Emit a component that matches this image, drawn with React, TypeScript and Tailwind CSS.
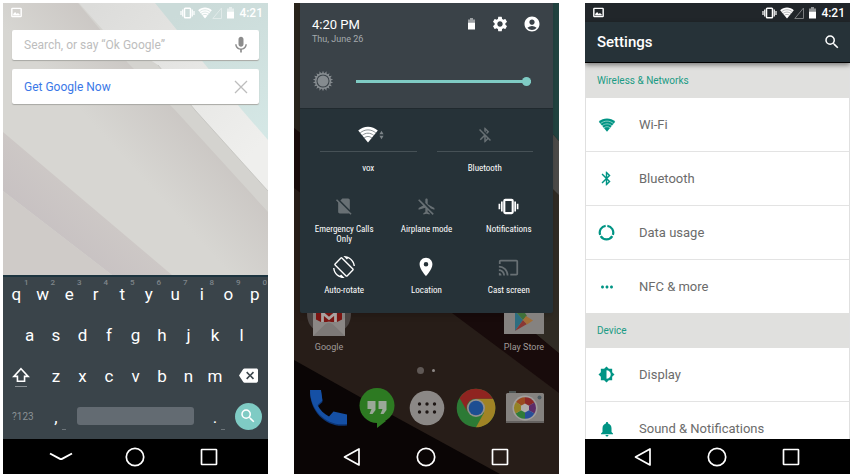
import type { ReactNode } from "react";
import {
  MdAccountCircle,
  MdAirplanemodeInactive,
  MdBackspace,
  MdBluetooth,
  MdBluetoothDisabled,
  MdBrightness6,
  MdCast,
  MdMic,
  MdMoreHoriz,
  MdNotifications,
  MdPlace,
  MdScreenRotation,
  MdSearch,
  MdSettings,
  MdSignalCellularNoSim,
} from "react-icons/md";

/* ---------- shared icons ---------- */

function WifiFan({ className, stripe }: { className: string; stripe: string }) {
  return (
    <svg viewBox="0 0 24 20" className={className} aria-hidden="true">
      <path d="M12 19.5 0.3 5.2C3.500 2.300 7.600 0.700 12 0.700s8.500 1.600 11.700 4.500z" fill="currentColor" />
      <g fill="none" stroke={stripe} strokeWidth="1.100">
        <path d="M2.500 8.200c5.600-5 13.400-5 19 0" />
        <path d="M4.900 11.200c4.200-3.700 10-3.700 14.200 0" />
        <path d="M7.300 14.200c2.800-2.400 6.600-2.400 9.400 0" />
      </g>
    </svg>
  );
}

function Vibrate({ className }: { className: string }) {
  return (
    <svg viewBox="0 0 30 24" className={className} aria-hidden="true" fill="none" stroke="currentColor">
      <rect x="9" y="2.500" width="12" height="19" rx="1.500" strokeWidth="3" />
      <path d="M5.500 5v14M24.500 5v14" strokeWidth="2.400" />
      <path d="M2 8v8M28 8v8" strokeWidth="2.400" />
    </svg>
  );
}

function Battery({ className }: { className: string }) {
  return (
    <svg viewBox="0 0 16 24" className={className} aria-hidden="true" fill="currentColor">
      <path d="M5 0h6v3h4v6H1V3h4z" opacity="0.500" />
      <path d="M1 9h14v14H1z" />
    </svg>
  );
}

function StatusBar({ className, stripe }: { className: string; stripe: string }) {
  return (
    <div className={`flex h-[19px] shrink-0 items-center justify-between pr-[5px] pl-2 text-white ${className}`}>
      <svg viewBox="0 0 20 20" className="size-[11px]" aria-label="Screenshot saved">
        <rect x="1.500" y="2.500" width="17" height="15" rx="1" fill="none" stroke="currentColor" strokeWidth="2.600" />
        <path d="M4 15.500v-3l3.500-3.500 3 3.500 2-1.500 3.500 2.500v2z" fill="currentColor" />
      </svg>
      <div className="flex items-center">
        <Vibrate className="mr-[3px] h-3 w-[15px]" />
        <WifiFan className="h-3 w-[14px]" stripe={stripe} />
        <svg viewBox="0 0 10 12" className="mr-1 h-3 w-[10px] opacity-40" aria-hidden="true">
          <path d="M9.500 1v10.500H.8z" fill="none" stroke="currentColor" />
        </svg>
        <Battery className="mr-1 h-3 w-[9px]" />
        <span className="text-xs font-medium">4:21</span>
      </div>
    </div>
  );
}

function NavBar({ keyboardOpen = false, className = "" }: { keyboardOpen?: boolean; className?: string }) {
  const button = "flex h-full w-[74px] items-center justify-center";
  return (
    <nav className={`relative flex h-[35px] shrink-0 justify-center pr-[2px] text-white ${className}`}>
      <button aria-label={keyboardOpen ? "Hide keyboard" : "Back"} className={button}>
        {keyboardOpen ? (
          <svg viewBox="0 0 24 10" className="h-[10px] w-6" fill="none" stroke="currentColor" strokeWidth="1.900">
            <path d="M1 1.500 10.500 6.700q1.500.8 3 0L23 1.500" />
          </svg>
        ) : (
          <svg viewBox="0 0 18 20" className="h-5 w-[18px]" fill="none" stroke="currentColor" strokeWidth="1.700" strokeLinejoin="round">
            <path d="M16 2v16L1.500 10z" />
          </svg>
        )}
      </button>
      <button aria-label="Home" className={button}>
        <svg viewBox="0 0 20 20" className="size-5" fill="none" stroke="currentColor" strokeWidth="1.700">
          <circle cx="10" cy="10" r="8.700" />
        </svg>
      </button>
      <button aria-label="Recent apps" className={button}>
        <svg viewBox="0 0 18 18" className="size-[18px]" fill="none" stroke="currentColor" strokeWidth="1.700">
          <rect x="1.500" y="1.500" width="15" height="15" rx="0.500" />
        </svg>
      </button>
    </nav>
  );
}

/* ---------- search screen ---------- */

function PaleWallpaper() {
  return (
    <svg viewBox="0 0 265 272" preserveAspectRatio="xMidYMid slice" className="absolute inset-0 size-full" aria-hidden="true">
      <defs>
        <linearGradient id="shade" gradientUnits="userSpaceOnUse" x1="125" y1="160" x2="185" y2="105">
          <stop offset="0" stopColor="#d7d6d2" />
          <stop offset="1" stopColor="#cac6c3" />
        </linearGradient>
        <linearGradient id="strip" gradientUnits="userSpaceOnUse" x1="40" y1="230" x2="75" y2="190">
          <stop offset="0" stopColor="#c7c1c2" />
          <stop offset="1" stopColor="#cdc8c6" />
        </linearGradient>
        <linearGradient id="band" gradientUnits="userSpaceOnUse" x1="90" y1="0" x2="250" y2="150">
          <stop offset="0" stopColor="#dcdcda" />
          <stop offset="1" stopColor="#efefed" />
        </linearGradient>
        <linearGradient id="sky" gradientUnits="userSpaceOnUse" x1="200" y1="0" x2="265" y2="137">
          <stop offset="0" stopColor="#cbdbd9" />
          <stop offset="1" stopColor="#d5e8e6" />
        </linearGradient>
      </defs>
      <rect width="265" height="272" fill="url(#shade)" />
      <path d="M0 129 169 272H109L0 188z" fill="url(#strip)" />
      <path d="M0 188 109 272H0z" fill="#cfcbc8" />
      <path d="M75 0 125 60 172 107 265 209V0z" fill="#d4d3cf" />
      <path d="M76 0 100 27 155 62 192 107 265 188V0z" fill="url(#band)" />
      <path d="M155 62 192 107 265 188" fill="none" stroke="#bdbdb9" strokeWidth="0.700" />
      <path d="M152 0 239 107 265 137V0z" fill="url(#sky)" />
    </svg>
  );
}

function Key({ label, hint, more = false }: { label: string; hint?: string; more?: boolean }) {
  return (
    <button className="relative flex h-full w-1/10 items-center justify-center pb-px text-[17px]">
      {label}
      {hint && <span className="absolute top-[2px] right-[1px] text-[8px] font-medium text-[#7f868a]">{hint}</span>}
      {more && <span className="absolute right-[3px] bottom-[9px] h-px w-1 bg-[#6d757a]" />}
    </button>
  );
}

function Keyboard() {
  const row = "flex h-[41px] justify-center";
  return (
    <div className="relative shrink-0 border-t-2 border-[#1d3540] bg-[#3a444a] text-white">
      <div className="-mt-[2px]">
        <div className={row}>
          {"qwertyuiop".split("").map((k, i) => (
            <Key key={k} label={k} hint={String((i + 1) % 10)} />
          ))}
        </div>
        <div className={row}>
          {"asdfghjkl".split("").map((k) => (
            <Key key={k} label={k} />
          ))}
        </div>
        <div className={row}>
          <button aria-label="Shift" className="flex h-full w-[15%] flex-col items-center pt-[10px] pr-[3px]">
            <svg viewBox="0 0 20 18" className="h-4 w-[18px]" fill="none" stroke="currentColor" strokeWidth="1.800">
              <path d="M10 2 18 10.500h-4V16H6v-5.500H2z" />
            </svg>
            <span className="mt-[3px] h-px w-3 bg-[#8a9195]" />
          </button>
          {"zxcvbnm".split("").map((k) => (
            <Key key={k} label={k} />
          ))}
          <button aria-label="Delete" className="flex h-full w-[15%] items-center justify-center pb-1">
            <MdBackspace className="size-[19px]" />
          </button>
        </div>
        <div className={row}>
          <button className="h-full w-[15%] pb-1 text-[10px] text-[#8a9195]">?123</button>
          <Key label="," more />
          <button aria-label="Space" className="h-full w-1/2 px-2 pb-[5px]">
            <span className="block h-[18px] rounded-[3px] bg-[#636b72]" />
          </button>
          <Key label="." more />
          <div className="flex w-[15%] items-center justify-center pb-[5px]">
            <button aria-label="Search" className="flex size-[27px] shrink-0 items-center justify-center rounded-full bg-[#7fcbc4]">
              <MdSearch className="size-[18px]" />
            </button>
          </div>
        </div>
      </div>
    </div>
  );
}

function SearchScreen() {
  return (
    <section className="flex flex-col overflow-hidden">
      <div className="relative flex-1">
        <PaleWallpaper />
        <div className="relative">
          <StatusBar className="" stripe="#c9d9d7" />
          <div className="mx-[9px] mt-2 flex h-[30px] items-center rounded-[2px] bg-white pr-2 pl-3 shadow-[0_1px_1px_#a8a8a4]">
            <input
              aria-label="Search"
              placeholder="Search, or say “Ok Google”"
              className="min-w-0 flex-1 text-xs outline-none placeholder:text-[#bdbdbd]"
            />
            <button aria-label="Voice search">
              <MdMic className="size-5 text-[#8c8c8c]" />
            </button>
          </div>
          <div className="mx-[9px] mt-[9px] flex h-[35px] items-center justify-between rounded-[2px] bg-white pr-2 pl-3 text-xs text-[#3b78e7] shadow-[0_1px_1px_#a8a8a4]">
            <a href="#now">Get Google Now</a>
            <button aria-label="Dismiss">
              <svg viewBox="0 0 20 20" className="size-5" fill="none" stroke="#bdbdbd" strokeWidth="1.300">
                <path d="M4 4l12 12M16 4 4 16" />
              </svg>
            </button>
          </div>
        </div>
      </div>
      <Keyboard />
      <NavBar keyboardOpen className="bg-black" />
    </section>
  );
}

/* ---------- quick settings screen ---------- */

function DarkWallpaper() {
  return (
    <svg viewBox="0 0 265 471" preserveAspectRatio="none" className="absolute inset-0 size-full" aria-hidden="true">
      <rect width="265" height="471" fill="#271d18" />
      <path d="M0 0h20v140L0 125z" fill="#29241c" />
      <path d="M0 125 20 140v60L0 185z" fill="#190c0b" />
      <path d="M0 357 98 412 206 471H0z" fill="#0a0505" />
      <path d="M158 310 265 390V350L205 300z" fill="#180b0b" />
      <path d="M205 300 265 350V185l-20-20z" fill="#302b24" />
      <path d="M240 110 265 138v54l-25-25z" fill="#4b4a48" />
      <path d="M240 0h25v138l-25-28z" fill="#214340" />
    </svg>
  );
}

function BrightnessSun() {
  const rays = Array.from({ length: 18 }, (_, i) => i * 20);
  return (
    <svg viewBox="0 0 24 24" className="size-[22px] shrink-0 text-[#858b8f]" aria-hidden="true">
      {rays.map((angle) => (
        <path key={angle} d="M10.500 4.500 12 .8l1.500 3.700z" fill="currentColor" transform={`rotate(${angle} 12 12)`} />
      ))}
      <circle cx="12" cy="12" r="8" fill="none" stroke="currentColor" strokeWidth="1.600" />
      <circle cx="12" cy="12" r="6" fill="currentColor" />
    </svg>
  );
}

function WideTile({ label, children }: { label: string; children: ReactNode }) {
  return (
    <button className="flex flex-1 flex-col items-center">
      <span className="flex h-[26px] w-full items-start justify-center border-b border-[#465156]">{children}</span>
      <span className="mt-[11px] text-[9px] leading-[10px]">{label}</span>
    </button>
  );
}

function Tile({ label, off = false, children }: { label: string; off?: boolean; children: ReactNode }) {
  return (
    <button className="flex flex-col items-center">
      <span className={`flex h-5 items-center justify-center ${off ? "text-[#687074]" : "text-white"}`}>{children}</span>
      <span className="mt-2 w-[72px] text-[9px] leading-[10px]">{label}</span>
    </button>
  );
}

function QuickPanel() {
  return (
    <div className="relative mx-[6px] rounded-b-[2px] bg-[#263238] text-white shadow-md">
      <div className="h-[106px] border-b border-[#20292e] bg-[#3a4248] px-3 pt-[14px]">
        <div className="flex justify-between">
          <div>
            <p className="text-[13px] leading-[15px]">4:20 PM</p>
            <p className="text-[9px] leading-[14px] text-[#a5aaad]">Thu, June 26</p>
          </div>
          <div className="flex h-[14px] items-center">
            <Battery className="mr-[15px] h-3 w-[9px]" />
            <button aria-label="Settings" className="mr-[14px]">
              <MdSettings className="size-[18px]" />
            </button>
            <button aria-label="User">
              <MdAccountCircle className="size-[18px]" />
            </button>
          </div>
        </div>
        <div className="mt-6 flex items-center">
          <BrightnessSun />
          <input
            type="range"
            aria-label="Brightness"
            defaultValue={100}
            className="mr-[10px] ml-[22px] h-[9px] min-w-0 flex-1 appearance-none bg-transparent [&::-webkit-slider-runnable-track]:h-[3px] [&::-webkit-slider-runnable-track]:bg-[#7fcbc4] [&::-webkit-slider-thumb]:-mt-[3px] [&::-webkit-slider-thumb]:size-[9px] [&::-webkit-slider-thumb]:appearance-none [&::-webkit-slider-thumb]:rounded-full [&::-webkit-slider-thumb]:bg-[#7fcbc4]"
          />
        </div>
      </div>
      <div className="px-[3px] pt-[17px] pb-[18px] font-['Roboto_Condensed',Roboto,sans-serif]">
        <div className="flex gap-5 px-[17px]">
          <WideTile label="vox">
            <span className="flex items-center pl-[6px]">
              <WifiFan className="h-[17px] w-5" stripe="#7c8488" />
              <svg viewBox="0 0 6 12" className="ml-px h-[10px] w-[5px] text-[#7c8488]" fill="currentColor" aria-hidden="true">
                <path d="M3 1 5.500 5h-5zM3 11 .5 7h5z" />
              </svg>
            </span>
          </WideTile>
          <WideTile label="Bluetooth">
            <MdBluetoothDisabled className="size-[18px] text-[#687074]" />
          </WideTile>
        </div>
        <div className="mt-[23px] grid grid-cols-3 gap-y-[13px]">
          <Tile label="Emergency Calls Only" off>
            <MdSignalCellularNoSim className="size-5" />
          </Tile>
          <Tile label="Airplane mode" off>
            <MdAirplanemodeInactive className="size-[19px]" />
          </Tile>
          <Tile label="Notifications">
            <Vibrate className="h-[17px] w-[21px]" />
          </Tile>
          <Tile label="Auto-rotate">
            <MdScreenRotation className="size-[22px]" />
          </Tile>
          <Tile label="Location">
            <MdPlace className="size-[22px]" />
          </Tile>
          <Tile label="Cast screen" off>
            <MdCast className="size-[21px]" />
          </Tile>
        </div>
      </div>
    </div>
  );
}

function HomeShortcuts() {
  return (
    <div className="relative flex justify-between px-[13px] text-center text-[9px] leading-[10px] whitespace-nowrap text-[#a09b99]">
      <a href="#google" className="flex w-11 flex-col items-center">
        <svg viewBox="0 0 44 24" className="h-6 w-11" aria-hidden="true">
          <path d="M0 0h44c0 7-2 12-6 15.500H6C2 12 0 7 0 0z" fill="#4b4543" />
          <path d="M6 0h32v23H6z" fill="#85817f" />
          <path d="M9 0h26v9H9z" fill="#7b1512" />
          <path d="M15.500 9V0L22 5.500 28.500 0v9" fill="none" stroke="#a8a2a0" strokeWidth="2.800" />
          <path d="M6 5 17 10.500q5-4 10 0L38 5v18H6z" fill="#8b8785" />
          <path d="M6 23 18.500 11q3.500-2.500 7 0L38 23z" fill="#7d7977" />
        </svg>
        <span className="mt-[5px]">Google</span>
      </a>
      <a href="#play" className="flex w-11 flex-col items-center">
        <svg viewBox="0 0 44 24" className="h-6 w-11" aria-hidden="true">
          <path d="M2 0h40v21H2z" fill="#858280" />
          <path d="M13 0v18L21 7 15 0z" fill="#2d6d80" />
          <path d="M13 18 21 7l4 4z" fill="#8a3734" />
          <path d="M15 0h8l2 3-4 4z" fill="#40703a" />
          <path d="M21 7 24 3l7 4.500-6 4z" fill="#a36f38" />
        </svg>
        <span className="mt-[5px]">Play Store</span>
      </a>
    </div>
  );
}

function Dock() {
  return (
    <div className="relative flex items-center justify-between px-[14px]">
      <button aria-label="Phone">
        <svg viewBox="0 0 40 40" className="size-10">
          <path d="M2 3.500h11l1.500 10.500-5 4.500c2.500 5 6.500 9 11.500 11.500l4.500-5L39 28v9.500c-20 3-37-13-37-34z" fill="#0d3574" />
          <path d="M2 2h11l1.500 10.500-5 4.500c2.500 5 6.500 9 11.500 11.500l4.500-5L39 26.500V36C19 39 2 23 2 2z" fill="#1550a5" />
        </svg>
      </button>
      <button aria-label="Hangouts">
        <svg viewBox="0 0 40 42" className="h-[42px] w-10">
          <circle cx="20" cy="18.500" r="17.500" fill="#2d7a22" />
          <path d="M20 34v7l9-7z" fill="#2d7a22" />
          <path d="M10.500 14h8v9l-3 4h-3l2-5h-4zM21.500 14h8v9l-3 4h-3l2-5h-4z" fill="#9aa898" />
        </svg>
      </button>
      <button aria-label="All apps">
        <svg viewBox="0 0 40 40" className="size-10">
          <circle cx="20" cy="20" r="17.300" fill="#8b8886" />
          <g fill="#1d1614">
            <circle cx="12.500" cy="16" r="1.700" />
            <circle cx="20" cy="16" r="1.700" />
            <circle cx="27.500" cy="16" r="1.700" />
            <circle cx="12.500" cy="24" r="1.700" />
            <circle cx="20" cy="24" r="1.700" />
            <circle cx="27.500" cy="24" r="1.700" />
          </g>
        </svg>
      </button>
      <button aria-label="Chrome">
        <svg viewBox="0 0 40 40" className="size-10">
          <circle cx="20" cy="20" r="19.300" fill="#2c7a35" />
          <path d="M20 10.700h17A19.300 19.300 0 0 1 20 39.300l8-14.600z" fill="#a08325" />
          <path d="M20 .7a19.300 19.300 0 0 1 17 10H20a9.300 9.300 0 0 0-8.100 14L3.600 10A19.300 19.300 0 0 1 20 .7z" fill="#8f2420" />
          <circle cx="20" cy="20" r="9" fill="#92908e" />
          <circle cx="20" cy="20" r="7.300" fill="#1d4e92" />
        </svg>
      </button>
      <button aria-label="Camera">
        <svg viewBox="0 0 40 40" className="size-10">
          <path d="M4 3h7v3H4z" fill="#4d5453" />
          <rect x="1" y="5" width="38" height="30" rx="1.500" fill="#85827f" />
          <path d="M1 33h38v2H1z" fill="#64615f" />
          <circle cx="34.500" cy="9.500" r="2" fill="#4e5a60" />
          <circle cx="20" cy="20" r="12.500" fill="#a19e9c" />
          <g transform="translate(20 20)">
            <path d="M0 0-9-6A10.800 10.800 0 0 1 0-10.800z" fill="#9a4a20" />
            <path d="M0 0V-10.800A10.800 10.800 0 0 1 9.400-5.400z" fill="#8c2727" />
            <path d="M0 0 9.400-5.400a10.800 10.800 0 0 1 0 10.800z" fill="#5d2c68" />
            <path d="M0 0 9.400 5.400A10.800 10.800 0 0 1 0 10.800z" fill="#274e98" />
            <path d="M0 0v10.800a10.800 10.800 0 0 1-9.400-5.400z" fill="#2f7b38" />
            <path d="M0 0-9.400 5.400A10.800 10.800 0 0 1-9-6z" fill="#948225" />
            <path d="M0-4.500 4-2.200v4.400L0 4.500-4 2.200v-4.400z" fill="#b0adab" />
          </g>
        </svg>
      </button>
    </div>
  );
}

function QuickSettingsScreen() {
  return (
    <section className="relative flex flex-col overflow-hidden bg-[#271d18]">
      <DarkWallpaper />
      <QuickPanel />
      <HomeShortcuts />
      <div className="relative mt-[14px] flex h-2 items-center justify-center gap-2 pr-[2px]">
        <span className="size-[7px] rounded-full bg-[#5f5855]" />
        <span className="size-[3px] rounded-full bg-[#8d8886]" />
      </div>
      <div className="mt-auto mb-[10px]">
        <Dock />
      </div>
      <NavBar />
    </section>
  );
}

/* ---------- settings screen ---------- */

function DataRing() {
  return (
    <svg viewBox="0 0 20 20" className="size-[17px]" fill="none" stroke="currentColor" strokeWidth="2.600" aria-hidden="true">
      <path d="M11 2.100a8 8 0 0 1 6.500 10.600M16.800 14.300a8 8 0 0 1-13.600 0M2.600 12.900A8 8 0 0 1 9 2.100" />
    </svg>
  );
}

function GroupTitle({ children }: { children: ReactNode }) {
  return <h2 className="flex h-[35px] shrink-0 items-center bg-[#e0e0de] px-[11px] text-[10px] text-[#1a9b84]">{children}</h2>;
}

function Item({ icon, label }: { icon: ReactNode; label: string }) {
  return (
    <li>
      <a href="#item" className="flex h-[53px] items-center">
        <span className="flex w-[41px] justify-center text-[#009484]">{icon}</span>
        <span className="pl-3 text-[13px] text-[#6b6b6b]">{label}</span>
      </a>
    </li>
  );
}

function SettingsScreen() {
  const list = "divide-y divide-[#e3e3e3]";
  return (
    <section className="flex flex-col overflow-hidden bg-white">
      <StatusBar className="bg-[#21262a]" stripe="#8b8f91" />
      <header className="relative flex h-[41px] shrink-0 items-center justify-between border-b border-black bg-[#263238] pr-[9px] pl-3 text-white shadow-[0_2px_5px_#0007]">
        <h1 className="text-[15px] font-medium">Settings</h1>
        <button aria-label="Search">
          <MdSearch className="size-[18px]" />
        </button>
      </header>
      <div className="min-h-0 flex-1 overflow-hidden border-x border-[#e0e0e0]">
        <GroupTitle>Wireless &amp; Networks</GroupTitle>
        <ul className={list}>
          <Item icon={<WifiFan className="h-[14px] w-[18px]" stripe="#a9dcd3" />} label="Wi-Fi" />
          <Item icon={<MdBluetooth className="size-[17px]" />} label="Bluetooth" />
          <Item icon={<DataRing />} label="Data usage" />
          <Item icon={<MdMoreHoriz className="size-[18px]" />} label="NFC & more" />
        </ul>
        <GroupTitle>Device</GroupTitle>
        <ul className={list}>
          <Item icon={<MdBrightness6 className="size-[17px]" />} label="Display" />
          <Item icon={<MdNotifications className="size-[18px]" />} label="Sound & Notifications" />
        </ul>
      </div>
      <NavBar className="bg-black" />
    </section>
  );
}

export default function App() {
  return (
    <main className="grid h-screen grid-cols-3 gap-[26px] bg-white pt-[3px] pr-1 pb-[2px] pl-[3px] font-[Roboto,sans-serif]">
      <SearchScreen />
      <QuickSettingsScreen />
      <SettingsScreen />
    </main>
  );
}
